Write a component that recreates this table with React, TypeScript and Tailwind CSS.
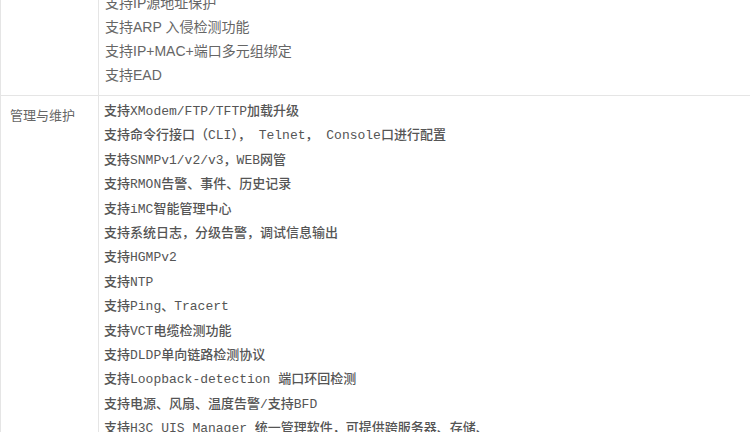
const securityItems = [
  "支持IP源地址保护",
  "支持ARP 入侵检测功能",
  "支持IP+MAC+端口多元组绑定",
  "支持EAD",
];

const maintenanceItems = [
  "支持XModem/FTP/TFTP加载升级",
  "支持命令行接口（CLI）， Telnet， Console口进行配置",
  "支持SNMPv1/v2/v3，WEB网管",
  "支持RMON告警、事件、历史记录",
  "支持iMC智能管理中心",
  "支持系统日志，分级告警，调试信息输出",
  "支持HGMPv2",
  "支持NTP",
  "支持Ping、Tracert",
  "支持VCT电缆检测功能",
  "支持DLDP单向链路检测协议",
  "支持Loopback-detection 端口环回检测",
  "支持电源、风扇、温度告警/支持BFD",
  "支持H3C UIS Manager 统一管理软件，可提供跨服务器、存储、",
  "网络的统一管理",
];

const sans = "font-['Liberation_Sans','Noto_Sans_CJK_SC',sans-serif]";
const mono = "font-['Liberation_Mono','Noto_Sans_CJK_SC',monospace]";

export default function App() {
  return (
    <div className="h-[432px] w-[750px] overflow-hidden bg-white">
      <table className="-mt-[18px] w-[780px] border-collapse">
        <tbody>
          <tr>
            <td className="w-[98px] border border-[#e5e5e5] align-top" />
            <td className={`border border-[#e5e5e5] py-2 pl-[6px] text-[14px] leading-[24px] text-[#666] ${sans}`}>
              {securityItems.map((item) => (
                <p key={item} className="whitespace-nowrap">
                  {item}
                </p>
              ))}
            </td>
          </tr>
          <tr>
            <td className={`w-[98px] border border-[#e5e5e5] pl-[9px] pt-2 align-top text-[13px] leading-[24px] text-[#666] ${sans}`}>
              管理与维护
            </td>
            <td className={`border border-[#e5e5e5] pt-[4px] pl-[5px] align-top text-[13px] font-medium leading-[24.4px] text-[#555] ${mono}`}>
              {maintenanceItems.map((item) => (
                <p key={item} className="whitespace-pre">
                  {item}
                </p>
              ))}
            </td>
          </tr>
        </tbody>
      </table>
    </div>
  );
}
